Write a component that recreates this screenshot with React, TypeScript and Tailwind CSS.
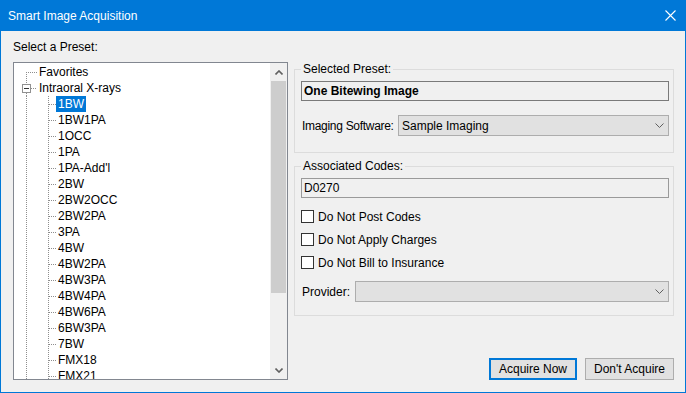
import React from 'react';

const presets = [
  '1BW',
  '1BW1PA',
  '1OCC',
  '1PA',
  "1PA-Add'l",
  '2BW',
  '2BW2OCC',
  '2BW2PA',
  '3PA',
  '4BW',
  '4BW2PA',
  '4BW3PA',
  '4BW4PA',
  '4BW6PA',
  '6BW3PA',
  '7BW',
  'FMX18',
  'FMX21',
];

const DOT = '#8e8e8e';

// connector lines for a top level node
const RootLines: React.FC<{ first?: boolean; expandable?: boolean }> = ({ first, expandable }) => (
  <svg width="23" height="16" className="shrink-0">
    {expandable ? (
      <>
        <line x1="12.5" y1="0" x2="12.5" y2="4" stroke={DOT} strokeDasharray="1 1" />
        <line x1="12.5" y1="13" x2="12.5" y2="16" stroke={DOT} strokeDasharray="1 1" />
        <rect x="8.5" y="4.5" width="8" height="8" fill="#fff" stroke="#919191" />
        <line x1="10" y1="8.5" x2="15" y2="8.5" stroke="#333" />
        <line x1="17" y1="8.5" x2="23" y2="8.5" stroke={DOT} strokeDasharray="1 1" />
      </>
    ) : (
      <>
        <line x1="12.5" y1={first ? 8 : 0} x2="12.5" y2="16" stroke={DOT} strokeDasharray="1 1" />
        <line x1="14" y1="8.5" x2="23" y2="8.5" stroke={DOT} strokeDasharray="1 1" />
      </>
    )}
  </svg>
);

// connector lines for a child node
const ChildLines: React.FC = () => (
  <svg width="42" height="16" className="shrink-0">
    <line x1="12.5" y1="0" x2="12.5" y2="16" stroke={DOT} strokeDasharray="1 1" />
    <line x1="34.5" y1="0" x2="34.5" y2="16" stroke={DOT} strokeDasharray="1 1" />
    <line x1="35" y1="8.5" x2="42" y2="8.5" stroke={DOT} strokeDasharray="1 1" />
  </svg>
);

const ScrollChevron: React.FC<{ down?: boolean }> = ({ down }) => (
  <svg width="8" height="5" viewBox="0 0 8 5">
    <polyline
      points={down ? '0.5,0.5 4,4 7.5,0.5' : '0.5,4.5 4,1 7.5,4.5'}
      fill="none"
      stroke="#606060"
      strokeWidth="1.6"
    />
  </svg>
);

const ComboChevron: React.FC = () => (
  <svg width="9" height="5" viewBox="0 0 9 5">
    <polyline points="0.5,0.5 4.5,4.5 8.5,0.5" fill="none" stroke="#606060" strokeWidth="1" />
  </svg>
);

const Checkbox: React.FC<{ label: string }> = ({ label }) => (
  <label className="flex h-[17px] items-center gap-[4px]">
    <span className="h-[13px] w-[13px] border border-[#333333] bg-white" />
    <span>{label}</span>
  </label>
);

export default function App() {
  return (
    <div className="flex h-[393px] w-[686px] flex-col border-x border-b border-[#0078d7] bg-[#f0f0f0] font-['Liberation_Sans',Arial,sans-serif] text-[12px] text-black">
      {/* title bar */}
      <div className="flex h-[31px] shrink-0 items-center justify-between bg-[#0078d7] pl-[7px] pr-[9px] text-white">
        <span>Smart Image Acquisition</span>
        <svg width="11" height="11" viewBox="0 0 11 11">
          <path d="M0.5 0.5 L10.5 10.5 M10.5 0.5 L0.5 10.5" stroke="#fff" strokeWidth="1.1" />
        </svg>
      </div>

      <div className="flex flex-1 pb-[12px] pl-[12px] pr-[11px]">
        {/* preset tree */}
        <div className="flex w-[275px] shrink-0 flex-col pt-[9px]">
          <div className="h-[15px] leading-[15px]">Select a Preset:</div>
          <div className="mt-[7px] flex h-[318px] border border-[#828790] bg-white">
            <div className="flex-1 overflow-hidden pt-[1px] leading-[16px]">
              <div className="flex h-[16px] items-center">
                <RootLines first />
                <span className="px-[2px]">Favorites</span>
              </div>
              <div className="flex h-[16px] items-center">
                <RootLines expandable />
                <span className="px-[2px]">Intraoral X-rays</span>
              </div>
              {presets.map((p, i) => (
                <div key={p} className="flex h-[16px] items-center">
                  <ChildLines />
                  <span className={i === 0 ? 'bg-[#0078d7] px-[2px] text-white' : 'px-[2px]'}>{p}</span>
                </div>
              ))}
            </div>
            <div className="flex w-[17px] flex-col bg-[#f0f0f0]">
              <div className="flex h-[18px] items-center justify-center">
                <ScrollChevron />
              </div>
              <div className="mx-px h-[212px] bg-[#cdcdcd]" />
              <div className="flex-1" />
              <div className="flex h-[17px] items-center justify-center">
                <ScrollChevron down />
              </div>
            </div>
          </div>
        </div>

        {/* right side */}
        <div className="ml-[6px] flex flex-1 flex-col pt-[31px]">
          <fieldset className="border border-[#dcdcdc] pb-[16px] pl-[6px] pr-[4px]">
            <legend className="px-[2px] leading-[14px]">Selected Preset:</legend>
            <div className="mt-[5px] flex h-[20px] items-center border border-[#7a7a7a] bg-[#f0f0f0] px-[2px] font-bold">
              One Bitewing Image
            </div>
            <div className="mt-[14px] flex items-center">
              <span className="w-[97px] shrink-0 whitespace-nowrap pl-[1px] tracking-[-0.3px]">Imaging Software:</span>
              <div className="flex h-[21px] flex-1 items-center justify-between border border-[#adadad] bg-[#e1e1e1] pl-[3px] pr-[4px]">
                <span>Sample Imaging</span>
                <ComboChevron />
              </div>
            </div>
          </fieldset>

          <fieldset className="mt-[6px] border border-[#dcdcdc] pb-[13px] pl-[6px] pr-[4px]">
            <legend className="px-[2px] leading-[14px]">Associated Codes:</legend>
            <div className="mt-[5px] flex h-[20px] items-center border border-[#9a9a9a] bg-[#f0f0f0] px-[2px]">
              D0270
            </div>
            <div className="mt-[10px] flex flex-col gap-[6px]">
              <Checkbox label="Do Not Post Codes" />
              <Checkbox label="Do Not Apply Charges" />
              <Checkbox label="Do Not Bill to Insurance" />
            </div>
            <div className="mt-[10px] flex items-center">
              <span className="w-[54px] shrink-0 whitespace-nowrap pl-[1px]">Provider:</span>
              <div className="flex h-[21px] flex-1 items-center justify-end border border-[#adadad] bg-[#e1e1e1] pr-[4px]">
                <ComboChevron />
              </div>
            </div>
          </fieldset>

          <div className="flex-1" />

          <div className="flex justify-end gap-[8px]">
            <button className="h-[22px] w-[88px] border-2 border-[#0078d7] bg-[#e1e1e1]">Acquire Now</button>
            <button className="h-[22px] w-[89px] border border-[#adadad] bg-[#e1e1e1]">Don't Acquire</button>
          </div>
        </div>
      </div>
    </div>
  );
}
